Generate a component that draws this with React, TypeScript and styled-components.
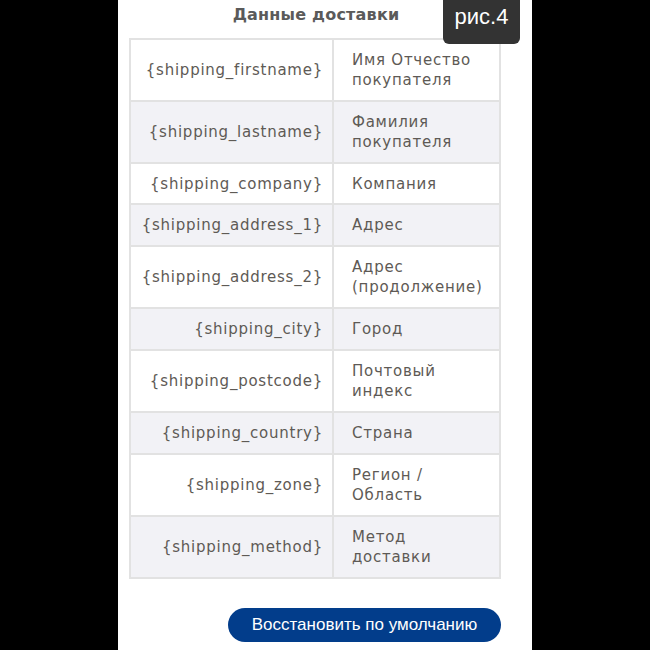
import React from "react";
import styled, { createGlobalStyle } from "styled-components";

const Global = createGlobalStyle`
  html, body { margin: 0; padding: 0; background: #000; }
  body { width: 650px; height: 650px; overflow: hidden; }
`;

const Page = styled.div`
  width: 650px;
  height: 650px;
  display: flex;
  justify-content: center;
  background: #000;
`;

const Panel = styled.div`
  position: relative;
  width: 414px;
  height: 650px;
  background: #fff;
  box-sizing: border-box;
  padding: 0 31px 0 11px;
  display: flex;
  flex-direction: column;
  font-family: "DejaVu Sans", Verdana, sans-serif;
`;

const Title = styled.div`
  height: 38px;
  box-sizing: border-box;
  padding-top: 5px;
  padding-left: 2px;
  text-align: center;
  font-weight: bold;
  font-size: 16px;
  letter-spacing: 0.2px;
  color: #5a5a5a;
`;

const Badge = styled.div`
  position: absolute;
  top: -6px;
  left: 325px;
  width: 77px;
  height: 50px;
  box-sizing: border-box;
  padding-top: 10px;
  border-radius: 6px;
  background: #333;
  color: #fff;
  font-family: "Liberation Sans", Arial, sans-serif;
  font-size: 22px;
  text-align: center;
`;

const Table = styled.table`
  width: 372px;
  border-collapse: collapse;
  border: 2px solid #e2e2e2;
  table-layout: fixed;
`;

const Row = styled.tr<{ $alt: boolean }>`
  background: ${(p) => (p.$alt ? "#f2f2f6" : "#fff")};
`;

const KeyCell = styled.td<{ $h: number }>`
  width: 203px;
  height: ${(p) => p.$h}px;
  box-sizing: border-box;
  border: 2px solid #e2e2e2;
  padding: 0 9px 0 2px;
  text-align: right;
  font-size: 15px;
  line-height: 20px;
  color: #5e5a55;
  white-space: nowrap;
  letter-spacing: 0.75px;
`;

const LabelCell = styled.td`
  box-sizing: border-box;
  border: 2px solid #e2e2e2;
  padding: 0 14px 0 18px;
  text-align: left;
  font-size: 15px;
  line-height: 20px;
  color: #5e5a55;
  letter-spacing: 0.75px;
`;

const Footer = styled.div`
  display: flex;
  justify-content: flex-end;
  padding-top: 29px;
`;

const Button = styled.button`
  width: 273px;
  height: 34px;
  border: none;
  border-radius: 17px;
  background: #023d8b;
  color: #fff;
  font-family: "Liberation Sans", Arial, sans-serif;
  font-size: 17px;
  padding: 0;
  cursor: pointer;
`;

const rows: [string, string, number][] = [
  ["{shipping_firstname}", "Имя Отчество покупателя", 62],
  ["{shipping_lastname}", "Фамилия покупателя", 62],
  ["{shipping_company}", "Компания", 41],
  ["{shipping_address_1}", "Адрес", 42],
  ["{shipping_address_2}", "Адрес (продолжение)", 62],
  ["{shipping_city}", "Город", 42],
  ["{shipping_postcode}", "Почтовый индекс", 62],
  ["{shipping_country}", "Страна", 42],
  ["{shipping_zone}", "Регион / Область", 62],
  ["{shipping_method}", "Метод доставки", 62],
];

export default function App() {
  return (
    <>
      <Global />
      <Page>
        <Panel>
          <Title>Данные доставки</Title>
          <Badge>рис.4</Badge>
          <Table>
            <tbody>
              {rows.map(([k, l, h], i) => (
                <Row key={k} $alt={i % 2 === 1}>
                  <KeyCell $h={h}>{k}</KeyCell>
                  <LabelCell>{l}</LabelCell>
                </Row>
              ))}
            </tbody>
          </Table>
          <Footer>
            <Button>Восстановить по умолчанию</Button>
          </Footer>
        </Panel>
      </Page>
    </>
  );
}
